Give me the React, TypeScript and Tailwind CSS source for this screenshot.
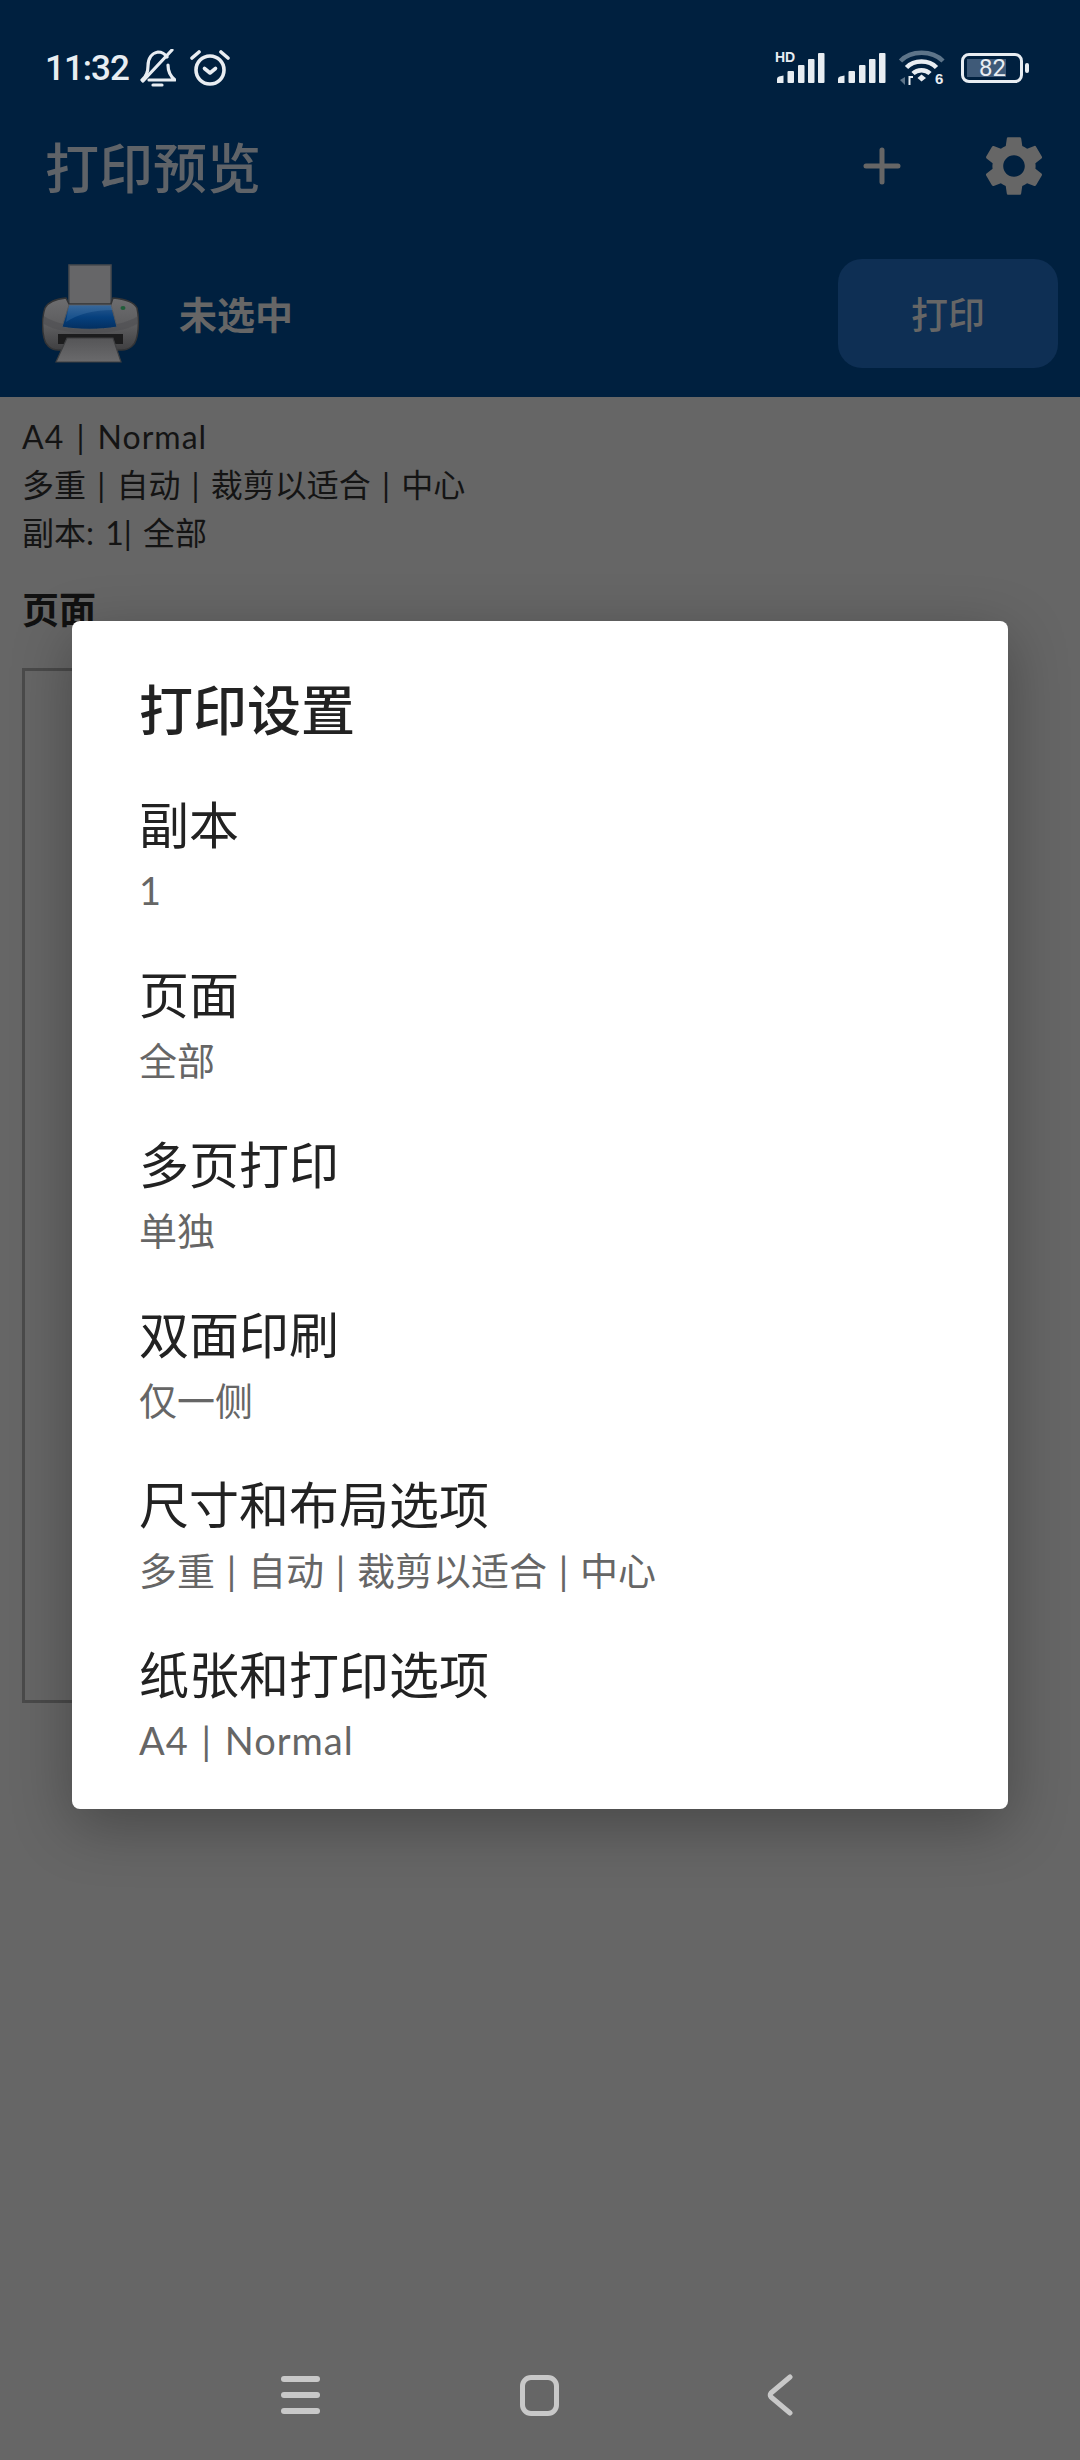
import { MdSettings } from "react-icons/md";

const font = { fontFamily: 'Lato, "Noto Sans CJK SC", sans-serif' };

const options = [
  { title: "副本", value: "1" },
  { title: "页面", value: "全部" },
  { title: "多页打印", value: "单独" },
  { title: "双面印刷", value: "仅一侧" },
  { title: "尺寸和布局选项", value: "多重 | 自动 | 裁剪以适合 | 中心" },
  { title: "纸张和打印选项", value: "A4 | Normal", latin: true },
];

function BellOff() {
  return (
    <svg width="36" height="38" viewBox="0 0 36 38" fill="none" stroke="#e8edf2" strokeWidth="3.2" strokeLinecap="round" strokeLinejoin="round">
      <path d="M2 31 C7 27 8 23 8 17 C8 9 12 4 18 3 C22 3 25 5 27 8" />
      <path d="M28 16 C28 23 30 27 35 31 H9" />
      <path d="M3 32 L32 1" />
      <path d="M13 36 H22" />
    </svg>
  );
}

function Alarm() {
  return (
    <svg width="40" height="36" viewBox="0 0 40 36" fill="none" stroke="#e8edf2" strokeWidth="3.6" strokeLinecap="round" strokeLinejoin="round">
      <circle cx="20" cy="20" r="14" />
      <path d="M14.5 18.5 L20 23 L25.5 18.5" />
      <path d="M2 8 L9 2" />
      <path d="M38 8 L31 2" />
    </svg>
  );
}

function Signal({ hd }: { hd?: boolean }) {
  return (
    <svg className="overflow-visible" width="48" height="32" viewBox="0 0 48 32" fill="#e8edf2">
      <path d="M0 31 V27 Q0 25 2 24.5 L6.5 23.5 V31 Z" />
      <rect x="10.5" y="19" width="6.5" height="12" rx="1" />
      <rect x="21" y="13" width="6.5" height="18" rx="1" />
      <rect x="31" y="7" width="6.5" height="24" rx="1" />
      <rect x="41" y="1" width="6.5" height="30" rx="1" />
      {hd && (
        <text x="-2" y="10" fontSize="14" fontWeight="700" fontFamily="Liberation Sans">HD</text>
      )}
    </svg>
  );
}

function Wifi() {
  return (
    <svg className="overflow-visible" width="46" height="36" viewBox="0 0 46 36" fill="none">
      <path d="M1.5 11 C12 0 33 0 44 11" stroke="#5d7489" strokeWidth="4.5" />
      <path d="M7.5 17.5 C15 9.5 30 9.5 37.5 17.5" stroke="#e8edf2" strokeWidth="4.5" />
      <path d="M14 23.5 C18.5 19 26.5 19 31 23.5" stroke="#e8edf2" strokeWidth="4.5" />
      <path d="M18.5 28 L22.5 24.5 L27 28 L22.5 31.5 Z" fill="#e8edf2" />
      <path d="M10.5 35 V27 L14 27" stroke="#e8edf2" strokeWidth="2" />
      <path d="M6 27 V35 L1 30 Z" fill="#5d7489" />
      <text x="36" y="34" fontSize="15" fontWeight="700" fill="#e8edf2" fontFamily="Liberation Sans">6</text>
    </svg>
  );
}

function Battery() {
  return (
    <div className="flex items-center gap-[2px]">
      <div className="flex h-[30px] w-[62px] items-center rounded-[8px] border-[3px] border-[#e8edf2] p-[3px]">
        <div className="flex h-full w-[39px] shrink-0 items-center justify-end bg-[#3f5a78]">
          <span className="text-[24px] leading-none text-[#e8edf2]" style={{ fontFamily: "Roboto, sans-serif" }}>82</span>
        </div>
      </div>
      <div className="h-[10px] w-[4px] rounded-[2px] bg-[#e8edf2]" />
    </div>
  );
}

function PrinterArt() {
  return (
    <svg width="98" height="100" viewBox="0 0 98 100">
      <defs>
        <linearGradient id="body" x1="0" y1="0" x2="0" y2="1">
          <stop offset="0" stopColor="#6d6d6f" />
          <stop offset="0.55" stopColor="#5c5c5e" />
          <stop offset="1" stopColor="#3f3f41" />
        </linearGradient>
        <linearGradient id="glass" x1="0" y1="0" x2="0" y2="1">
          <stop offset="0" stopColor="#2b5a8e" />
          <stop offset="0.5" stopColor="#06407e" />
          <stop offset="1" stopColor="#032f60" />
        </linearGradient>
        <linearGradient id="tray" x1="0" y1="0" x2="0" y2="1">
          <stop offset="0" stopColor="#555557" />
          <stop offset="1" stopColor="#6a6a6c" />
        </linearGradient>
      </defs>
      <path d="M27 1 H69 V42 H27 Z" fill="#666668" stroke="#47494e" strokeWidth="1.5" />
      <path d="M24 34 L27 40 H69 L71 34 C82 35 92 38 95 44 C97 52 97 68 94 76 C93 80 88 86 80 86 H16 C8 86 3 80 2 74 C0 66 0 52 3 44 C6 38 15 35 24 34 Z" fill="url(#body)" stroke="#333436" strokeWidth="1.5" />
      <path d="M2 52 C20 66 76 66 96 52 L95 60 C76 72 20 72 2 60 Z" fill="#4f4f51" opacity="0.6" />
      <path d="M27 41 H69 L75 63 C58 66 36 66 20 63 Z" fill="url(#glass)" stroke="#52565c" strokeWidth="1" />
      <path d="M24 58 C36 50 52 46 71 46 L69 41 H27 Z" fill="#6fa0cf" opacity="0.2" />
      <path d="M16 70 H81 V80 H16 Z" fill="#1c1c1d" />
      <path d="M25 74 H71 L79 98 H14 Z" fill="url(#tray)" stroke="#3e3f41" strokeWidth="1.2" />
      <ellipse cx="81" cy="44" rx="2.5" ry="2" fill="#1f5d3a" />
    </svg>
  );
}

export default function App() {
  return (
    <div className="relative flex h-[2460px] w-[1080px] flex-col overflow-hidden bg-[#666666]" style={font}>
      <header className="h-[397px] bg-[#00203f]">
        <div className="flex h-[110px] items-center justify-between pt-[26px] pr-[51px] pl-[45px]">
          <div className="flex items-center">
            <span className="text-[35px] leading-none font-medium tracking-[-1px] text-[#e8edf2]" style={{ fontFamily: "Roboto, sans-serif" }}>11:32</span>
            <span className="ml-[11px] flex"><BellOff /></span>
            <span className="ml-[14px] flex"><Alarm /></span>
          </div>
          <div className="flex items-center gap-[13px]">
            <Signal hd />
            <Signal />
            <Wifi />
            <span className="ml-[3px]"><Battery /></span>
          </div>
        </div>

        <div className="flex h-[112px] items-center pr-[30px] pl-[45px]">
          <h1 className="mt-[6px] text-[54px] leading-none font-medium text-[#5f6368]">打印预览</h1>
          <svg className="mr-[77px] ml-auto" width="38" height="38" viewBox="0 0 38 38" stroke="#666666" strokeWidth="5" strokeLinecap="round">
            <path d="M19 3 V35 M3 19 H35" />
          </svg>
          <MdSettings className="h-[72px] w-[72px] text-[#666666]" />
        </div>

        <div className="flex items-center pt-[37px] pr-[22px] pl-[42px]">
          <PrinterArt />
          <span className="ml-[39px] text-[38px] leading-none font-bold text-[#666666]">未选中</span>
          <button className="ml-auto h-[109px] w-[220px] rounded-[24px] bg-[#0e2f54] pt-[2px] text-[37px] font-medium text-[#666666]">打印</button>
        </div>
      </header>

      <main className="flex-1 px-[22px] pt-[16px]">
        <div className="text-[32px] leading-[48px] text-[#141414] [word-spacing:3px]">
          <p className="tracking-[1px]">A4 | Normal</p>
          <p>多重 | 自动 | 裁剪以适合 | 中心</p>
          <p>副本: 1| 全部</p>
        </div>
        <h2 className="mt-[28px] text-[37px] leading-[50px] font-bold text-[#111111]">页面</h2>
        <div className="mt-[33px] h-[1035px] w-[900px] border-[3px] border-[#4a4a4a]" />
      </main>

      <nav className="flex h-[140px] items-center pt-[10px]">
        <div className="ml-[281px] flex w-[39px] flex-col gap-[10px]">
          <div className="h-[6px] rounded-full bg-[#c8c8c8]" />
          <div className="h-[6px] rounded-full bg-[#c8c8c8]" />
          <div className="h-[6px] rounded-full bg-[#c8c8c8]" />
        </div>
        <div className="ml-[200px] h-[41px] w-[39px] rounded-[11px] border-[5px] border-[#c8c8c8]" />
        <svg className="ml-[208px]" width="26" height="42" viewBox="0 0 26 42" fill="none" stroke="#c8c8c8" strokeWidth="5" strokeLinecap="round" strokeLinejoin="round">
          <path d="M23 3 L4 19 Q2.5 21 4 23 L23 39" />
        </svg>
      </nav>

      <div className="absolute top-[621px] left-[72px] h-[1188px] w-[936px] rounded-[8px] bg-white px-[67px] pt-[55px] shadow-[0_16px_60px_rgba(0,0,0,0.3)]">
        <h3 className="mb-[44px] text-[54px] leading-[70px] font-medium text-[#222222]">打印设置</h3>
        {options.map((o) => (
          <div key={o.title} className="h-[170px]">
            <div className="text-[50px] leading-[70px] text-[#222222]">{o.title}</div>
            <div className={o.latin
              ? "mt-[5px] text-[38px] leading-[50px] tracking-[1px] text-[#666666] [word-spacing:2px]"
              : "mt-[5px] text-[38px] leading-[50px] text-[#666666] [word-spacing:2px]"}>{o.value}</div>
          </div>
        ))}
      </div>
    </div>
  );
}
